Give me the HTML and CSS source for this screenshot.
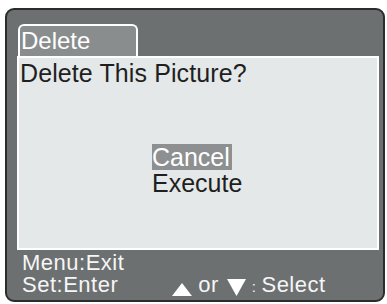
FILE: index.html
```
<!DOCTYPE html>
<html>
<head>
<meta charset="utf-8">
<link rel="stylesheet" href="styles.css">
</head>
<body>
<div class="frame">
  <div class="tab">Delete</div>
  <div class="panel">
    <div class="title">Delete This Picture?</div>
    <div class="menu">
      <span class="item sel-item">Cancel</span>
      <span class="item">Execute</span>
    </div>
  </div>
  <div class="foot">
    <div class="line">Menu:Exit</div>
    <div class="line"><span class="set">Set:Enter</span><span class="nav"><svg class="up" width="20" height="13" viewBox="0 0 20 13"><polygon points="10,0 20,13 0,13" fill="#fff"/></svg><span class="or">or</span><svg class="down" width="19" height="17" viewBox="0 0 19 17"><polygon points="0,0 19,0 9.5,17" fill="#fff"/></svg><span class="colon">:</span><span class="sel">Select</span></span></div>
  </div>
</div>
</body>
</html>
```
FILE: styles.css
```
html, body {
  margin: 0;
  padding: 0;
  background: #ffffff;
}
body {
  font-family: "Liberation Sans", Arial, sans-serif;
}
.frame {
  box-sizing: border-box;
  margin: 8px 0 0 5px;
  width: 380px;
  height: 294px;
  border: 2px solid #2c2c2c;
  border-radius: 9px;
  background: #6c7071;
  padding: 14px 4px 0 10px;
}
.tab {
  box-sizing: border-box;
  width: 120px;
  height: 32px;
  margin-left: 1px;
  border: 2px solid #ffffff;
  border-bottom: none;
  border-radius: 6px 6px 0 0;
  background: #8a8d8e;
  color: #ffffff;
  font-size: 24px;
  line-height: 27px;
  padding: 1px 0 0 1px;
}
.panel {
  box-sizing: border-box;
  height: 194px;
  border: 2px solid #ffffff;
  background: #e4e8e8;
  color: #1f1f1f;
  font-size: 25px;
  padding: 1px 0 0 1px;
}
.title {
  line-height: 28px;
  letter-spacing: 0.1px;
}
.menu {
  margin: 57px 0 0 132px;
  display: flex;
  flex-direction: column;
  align-items: flex-start;
}
.item {
  line-height: 26px;
  padding-right: 2px;
}
.sel-item {
  background: #8d8f91;
  color: #ffffff;
}
.foot {
  margin-top: 2px;
  padding-left: 5px;
  color: #f6f6f6;
  font-size: 22px;
  letter-spacing: 0.5px;
}
.line {
  line-height: 22px;
  white-space: nowrap;
}
.nav {
  margin-left: 54px;
}
.up, .down {
  vertical-align: -4px;
}
.or {
  margin-left: 6px;
}
.down {
  margin-left: 8px;
}
.colon {
  font-size: 15px;
  margin-left: 6px;
}
.sel {
  margin-left: 5px;
}
```
